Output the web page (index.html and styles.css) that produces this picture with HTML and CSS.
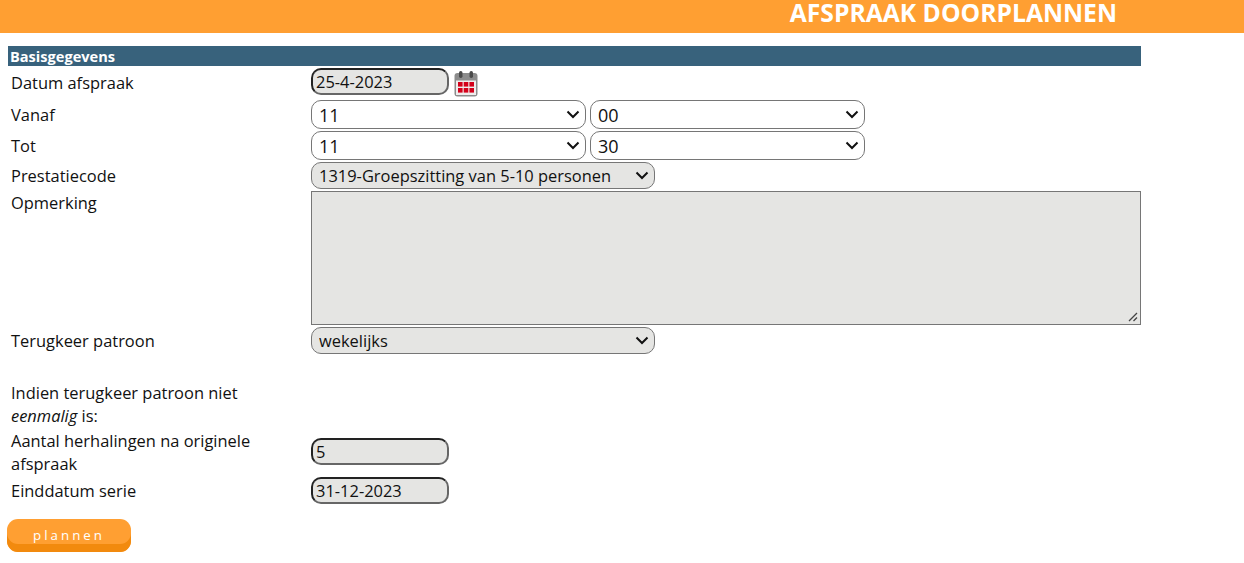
FILE: index.html
```html
<!DOCTYPE html>
<html lang="nl">
<head>
<meta charset="UTF-8">
<title>Afspraak doorplannen</title>
<link rel="stylesheet" href="styles.css">
</head>
<body>
<div class="top-bar"><h1>AFSPRAAK DOORPLANNEN</h1></div>
<form class="plan-form">
    <div class="section-title">Basisgegevens</div>

    <div class="row row-date">
        <label for="datum">Datum afspraak</label>
        <div class="field">
            <input class="text-input" id="datum" type="text" value="25-4-2023">
            <svg class="cal-icon" width="24" height="26" viewBox="0 0 24 26">
                <rect x="0.5" y="2" width="23" height="23.5" rx="3" fill="#8c8c8c"/>
                <rect x="2" y="9.5" width="20" height="14.5" fill="#efeded"/>
                <rect x="5" y="0" width="3.5" height="7" rx="1.7" fill="#4a4a4a"/>
                <rect x="15.5" y="0" width="3.5" height="7" rx="1.7" fill="#4a4a4a"/>
                <g fill="#d4001a">
                    <rect x="4" y="11" width="4.6" height="4.6"/>
                    <rect x="9.7" y="11" width="4.6" height="4.6"/>
                    <rect x="15.4" y="11" width="4.6" height="4.6"/>
                    <rect x="4" y="17" width="4.6" height="4.6"/>
                    <rect x="9.7" y="17" width="4.6" height="4.6"/>
                    <rect x="15.4" y="17" width="4.6" height="4.6"/>
                </g>
            </svg>
        </div>
    </div>

    <div class="row row-time">
        <label for="van-uur">Vanaf</label>
        <div class="field">
            <select class="time-select" id="van-uur"><option>11</option></select>
            <select class="time-select"><option>00</option></select>
        </div>
    </div>

    <div class="row row-time">
        <label for="tot-uur">Tot</label>
        <div class="field">
            <select class="time-select" id="tot-uur"><option>11</option></select>
            <select class="time-select"><option>30</option></select>
        </div>
    </div>

    <div class="row row-code">
        <label for="code">Prestatiecode</label>
        <div class="field">
            <select class="grey-select" id="code"><option>1319-Groepszitting van 5-10 personen</option></select>
        </div>
    </div>

    <div class="row row-note">
        <label for="opmerking">Opmerking</label>
        <div class="field">
            <textarea id="opmerking"></textarea>
        </div>
    </div>

    <div class="row row-pattern">
        <label for="patroon">Terugkeer patroon</label>
        <div class="field">
            <select class="grey-select" id="patroon"><option>wekelijks</option></select>
        </div>
    </div>

    <p class="hint">Indien terugkeer patroon niet <em>eenmalig</em> is:</p>

    <div class="row row-repeat">
        <label for="aantal">Aantal herhalingen na originele afspraak</label>
        <div class="field">
            <input class="text-input" id="aantal" type="text" value="5">
        </div>
    </div>

    <div class="row row-end">
        <label for="einde">Einddatum serie</label>
        <div class="field">
            <input class="text-input" id="einde" type="text" value="31-12-2023">
        </div>
    </div>

    <button class="btn-plan" type="button">plannen</button>
</form>
</body>
</html>
```
FILE: styles.css
```css
* {
    box-sizing: border-box;
}

body {
    margin: 0;
    background: #fff;
    color: #111;
    font-family: "Open Sans", "Liberation Sans", sans-serif;
    font-size: 16.45px;
}

.top-bar {
    height: 33px;
    padding-right: 127px;
    background: #ff9f32;
    text-align: right;
}

.top-bar h1 {
    margin: 0;
    color: #fff;
    font-size: 24.7px;
    font-weight: 700;
    line-height: 26px;
}

.plan-form {
    width: 1133px;
    margin: 13px 0 0 8px;
}

.section-title {
    height: 20px;
    padding-left: 2px;
    background: #38627c;
    color: #fff;
    font-size: 14.6px;
    font-weight: 700;
    line-height: 20px;
}

.row {
    display: flex;
    align-items: center;
}

.row label {
    flex: none;
    width: 303px;
    padding: 0 50px 0 3px;
    line-height: 23px;
}

.field {
    display: flex;
    flex: 1;
    align-items: center;
    gap: 4px;
}

.row-date {
    height: 33px;
}

.row-date .field {
    padding-bottom: 2px;
}

.row-time {
    height: 31px;
}

.row-code {
    height: 30px;
}

.row-code label {
    padding-bottom: 1px;
}

.row-code .field {
    padding-bottom: 1px;
}

.row-note {
    align-items: flex-start;
    height: 136px;
}

.row-pattern {
    height: 27px;
}

.text-input {
    width: 138px;
    height: 27px;
    margin: 0;
    padding: 0 3px;
    border: 2px solid;
    border-color: #222 #666 #666 #222;
    border-radius: 10px;
    outline: none;
    background: #e5e5e3;
    color: #111;
    font: 16.45px "Open Sans", "Liberation Sans", sans-serif;
}

.cal-icon {
    display: block;
    margin: 5px 0 0 1px;
}

select {
    height: 29px;
    margin: 0;
    padding: 0 30px 0 7px;
    border: 1px solid #767676;
    border-radius: 10px;
    background-position: right 5px center;
    background-repeat: no-repeat;
    background-image: url("data:image/svg+xml,%3Csvg xmlns='http://www.w3.org/2000/svg' width='14' height='9' viewBox='0 0 14 9'%3E%3Cpath d='M1.5 1.5 7 7l5.5-5.5' fill='none' stroke='%23111' stroke-width='2'/%3E%3C/svg%3E");
    color: #111;
    font: 16.45px "Open Sans", "Liberation Sans", sans-serif;
    -webkit-appearance: none;
    appearance: none;
}

.time-select {
    width: 275px;
    background-color: #fff;
    font-size: 18px;
}

.grey-select {
    width: 344px;
    height: 27px;
    background-color: #e5e5e3;
}

textarea {
    display: block;
    width: 830px;
    height: 134px;
    margin: 0;
    border: 1px solid #767676;
    background: #e5e5e3;
}

textarea::-webkit-resizer {
    background-image: url("data:image/svg+xml,%3Csvg xmlns='http://www.w3.org/2000/svg' width='15' height='15' viewBox='0 0 15 15'%3E%3Cpath d='M4 12 12 4M8.5 12 12 8.5' fill='none' stroke='%23444' stroke-width='1.3'/%3E%3C/svg%3E");
}

.hint {
    width: 253px;
    margin: 27px 0 0;
    padding-left: 3px;
    line-height: 23px;
}

.row-repeat {
    height: 46px;
    margin-top: 2px;
}

.row-repeat .field {
    padding-bottom: 1px;
}

.row-end {
    height: 31px;
}

.btn-plan {
    display: block;
    width: 124px;
    height: 33px;
    margin: 13px 0 0 -1px;
    padding: 0 0 1px;
    border: 0;
    border-radius: 11px;
    box-shadow: inset 0 -8px 0 #f28a0e;
    background: #ff9f32;
    color: #fff;
    font: 13.3px "Open Sans", "Liberation Sans", sans-serif;
    letter-spacing: 3px;
}
```
